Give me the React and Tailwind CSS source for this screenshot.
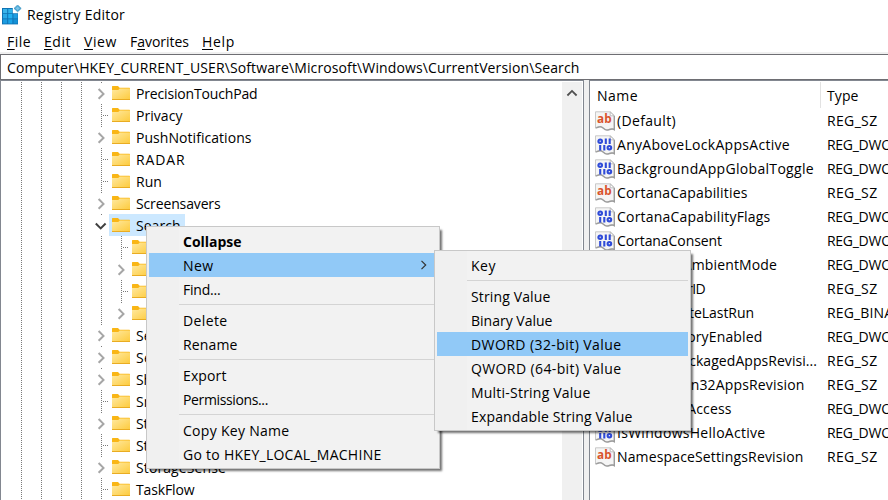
import React, { useLayoutEffect, useRef, useState } from "react";

/* Text that spreads its letters evenly over a fixed width. */
function Fit({ w, className = "", children }) {
  const ref = useRef(null);
  const [spacing, setSpacing] = useState(0);
  useLayoutEffect(() => {
    const el = ref.current;
    const natural = el.getBoundingClientRect().width;
    setSpacing((w - natural) / el.textContent.length);
  }, [w]);
  return (
    <span ref={ref} className={"inline-block shrink-0 whitespace-pre " + className} style={{ letterSpacing: spacing + "px" }}>
      {children}
    </span>
  );
}

function AppIcon() {
  return (
    <svg width="20" height="20" viewBox="0 0 20 20" shapeRendering="geometricPrecision">
      <rect x="0" y="3" width="16" height="16.4" fill="#0f73b4" />
      <rect x="1" y="4" width="4.2" height="4.2" fill="#3ab4ea" />
      <rect x="6.2" y="4" width="4.2" height="4.2" fill="#2fb2ea" />
      <rect x="1" y="9" width="4.2" height="4.4" fill="#2aa9e6" />
      <rect x="6.2" y="9" width="4.2" height="4.4" fill="#22b0f0" />
      <rect x="11.4" y="9" width="4.2" height="4.4" fill="#1f9de0" />
      <rect x="1" y="14.3" width="4.2" height="4.2" fill="#1c9ce0" />
      <rect x="6.2" y="14.3" width="4.2" height="4.2" fill="#1ba4e8" />
      <rect x="11.4" y="14.3" width="4.2" height="4.2" fill="#1591d6" />
      <path d="M10.8 2.2h5.4v6h-5.4z" fill="#fff" />
      <path d="M15.6 0 19.2 3.4 15.6 6.8 12 3.4z" fill="#4aa9d8" stroke="#3a8fbd" strokeWidth="0.7" />
      <path d="M15.6 1.4 17.6 3.4 15.6 5.2 13.6 3.4z" fill="#7fc4e6" />
    </svg>
  );
}

function Folder() {
  return (
    <svg width="18" height="14" viewBox="0 0 18 14" className="shrink-0">
      <defs>
        <linearGradient id="folderFill" x1="0" y1="0" x2="1" y2="1">
          <stop offset="0" stopColor="#ffe9a0" />
          <stop offset="1" stopColor="#fdcb3e" />
        </linearGradient>
      </defs>
      <path d="M0 .6Q0 0 .6 0H6l1.6 1.7H17.4q.6 0 .6.6V5H0z" fill="#f9b616" />
      <path d="M0 4h6.2L7.8 2.6H18V13.4H0z" fill="url(#folderFill)" />
      <path d="M0 13h18v1H0z" fill="#e9ac22" />
    </svg>
  );
}

function ValueIcon({ kind }) {
  return (
    <svg width="20" height="20" viewBox="0 0 20 20" className="shrink-0">
      <path d="M.5.8H15.4L19.4 4.6V18.4C16.6 16.6 14.6 18.8 12 18.8 8.6 19 8.2 15.2 5 15.4 3.2 15.4 2.4 16.4.5 16.6z" fill="#f5f5f5" stroke="#c4c4c4" strokeWidth="0.9" />
      <path d="M.5 16.9C2.4 16.7 3.2 15.7 5 15.7 8.2 15.6 8.6 19.2 12 19.1 14.6 19 16.6 16.9 19.3 18.7V5" fill="none" stroke="#9c9c9c" strokeWidth="1.4" />
      <path d="M15.2 1v3.8h4z" fill="#fff" stroke="#b0b0b0" strokeWidth="0.8" />
      {kind === "ab" ? (
        <text x="2.1" y="12.4" fontSize="12.5" fontWeight="700" fontFamily="Open Sans, sans-serif" textLength="14.5" lengthAdjust="spacingAndGlyphs" fill="#d9532c">ab</text>
      ) : (
        <g fill="none" stroke="#2f4bd8" strokeWidth="2.1">
          <ellipse cx="5.2" cy="6.2" rx="1.8" ry="1.7" />
          <path d="M10.8 3.5v5.4M14.7 3.5v5.4" />
          <path d="M5.2 10v5.4M9.3 10v5.4" />
          <ellipse cx="14.4" cy="12.7" rx="1.8" ry="1.7" />
        </g>
      )}
    </svg>
  );
}

function DotV({ className = "h-[22px]" }) {
  return <div className={"w-px bg-[repeating-linear-gradient(to_bottom,#7a7a7a_0_1px,transparent_1px_2px)] " + className} />;
}

function Expander({ state }) {
  if (state === "leaf") {
    return (
      <div className="ml-[10px] flex h-[22px] w-2 items-center">
        <DotV />
        <div className="ml-px h-px w-[6px] bg-[repeating-linear-gradient(to_right,#7a7a7a_0_1px,transparent_1px_2px)]" />
      </div>
    );
  }
  return (
    <div className="h-[22px] w-[18px]">
      <DotV className="ml-[10px] h-px" />
      <svg width="18" height="20" viewBox="0 0 18 20" className="block" fill="none">
        {state === "open" ? (
          <path d="M4.8 8.5l4.9 4.9 4.9-4.9" stroke="#404040" strokeWidth="2" />
        ) : (
          <path d="M7.6 6l4.9 4.9-4.9 4.9" stroke="#a6a6a6" strokeWidth="2" />
        )}
      </svg>
    </div>
  );
}

const TREE = [
  ["PrecisionTouchPad", "closed", 121.5],
  ["Privacy", "leaf", 46.5],
  ["PushNotifications", "closed", 115.5],
  ["RADAR", "leaf", 49.5],
  ["Run", "leaf", 26],
  ["Screensavers", "closed", 84.5],
  ["Search", "open", 44.5],
  ["Flighting", "leaf", 60, 1],
  ["Jumplist", "closed", 60, 1],
  ["Launch", "leaf", 60, 1],
  ["Microsoft", "closed", 60, 1],
  ["SearchSettings", "closed", 98],
  ["Security", "closed", 54],
  ["Shell Extensions", "closed", 104],
  ["SmartGlass", "leaf", 74],
  ["StartLayout", "closed", 74],
  ["StartupNotify", "leaf", 86],
  ["StorageSense", "closed", 90],
  ["TaskFlow", "leaf", 58.5],
];

function TreeRow({ name, state, w, child }) {
  return (
    <div className="flex h-[22px] shrink-0 items-center pl-[10px]">
      {(child ? [0, 1, 2, 3, 4] : [0, 1, 2, 3]).map((i) => (
        <div key={i} className="flex w-5 shrink-0 pl-[10px]">
          <DotV />
        </div>
      ))}
      <Expander state={state} />
      <div className={"flex h-[22px] items-center pr-1 pl-[3px] " + (state === "open" ? "bg-[#cce8ff]" : "")}>
        <Folder />
        <Fit w={w} className="ml-[6px] pt-[2px] leading-[22px]">{name}</Fit>
      </div>
    </div>
  );
}

const VALUES = [
  ["(Default)", "ab", "REG_SZ", 59],
  ["AnyAboveLockAppsActive", "bin", "REG_DWORD", 173],
  ["BackgroundAppGlobalToggle", "bin", "REG_DWORD", 197],
  ["CortanaCapabilities", "ab", "REG_SZ", 130.5],
  ["CortanaCapabilityFlags", "bin", "REG_DWORD", 153.5],
  ["CortanaConsent", "bin", "REG_DWORD", 105],
  ["CortanaInAmbientMode", "bin", "REG_DWORD", 160],
  ["CortanaUserID", "ab", "REG_SZ", 88],
  ["CortanaStateLastRun", "bin", "REG_BINARY", 137],
  ["DeviceHistoryEnabled", "bin", "REG_DWORD", 145.5],
  ["InstalledPackagedAppsRevisi...", "ab", "REG_SZ", 200],
  ["InstalledWin32AppsRevision", "ab", "REG_SZ", 187.5],
  ["IsAssignedAccess", "bin", "REG_DWORD", 114.5],
  ["IsWindowsHelloActive", "bin", "REG_DWORD", 148.5],
  ["NamespaceSettingsRevision", "ab", "REG_SZ", 186.5],
];
const TYPE_WIDTH = { REG_SZ: 50.5, REG_DWORD: 83, REG_BINARY: 83 };

function MenuItem({ label, w, active, bold, arrow }) {
  return (
    <div className={"flex h-6 items-center justify-between pl-[34px] " + (active ? "bg-[#91c9f7]" : "")}>
      <Fit w={w} className={bold ? "pt-[2px] leading-[22px] font-bold" : "pt-[2px] leading-[22px]"}>{label}</Fit>
      {arrow && (
        <svg width="8" height="12" viewBox="0 0 8 12" className="mr-[9px]" fill="none">
          <path d="M1.5 1.8l4.2 4.2-4.2 4.2" stroke="#333" strokeWidth="1.2" />
        </svg>
      )}
    </div>
  );
}

function Menu({ items, className }) {
  return (
    <div className={"absolute border border-[#c8c8c8] bg-[linear-gradient(to_right,#f0f0f0_32px,#f2f2f2_32px)] p-[2px] shadow-[3px_3px_2px_-1px_rgba(0,0,0,0.55)] " + className}>
      {items.map((it, i) =>
        it ? (
          <MenuItem key={i} {...it} />
        ) : (
          <div key={i} className="flex h-[7px] items-center pl-[30px]">
            <div className="h-px w-full bg-[#d4d4d4]" />
          </div>
        )
      )}
    </div>
  );
}

const CONTEXT = [
  { label: "Collapse", w: 58.5, bold: true },
  { label: "New", w: 30.5, active: true, arrow: true },
  { label: "Find...", w: 37.5 },
  null,
  { label: "Delete", w: 44.5 },
  { label: "Rename", w: 54.5 },
  null,
  { label: "Export", w: 43.5 },
  { label: "Permissions...", w: 85 },
  null,
  { label: "Copy Key Name", w: 106.5 },
  { label: "Go to HKEY_LOCAL_MACHINE", w: 198.5 },
];

const NEW_MENU = [
  { label: "Key", w: 25 },
  null,
  { label: "String Value", w: 79.5 },
  { label: "Binary Value", w: 81.5 },
  { label: "DWORD (32-bit) Value", w: 150.5, active: true },
  { label: "QWORD (64-bit) Value", w: 150.5 },
  { label: "Multi-String Value", w: 119.5 },
  { label: "Expandable String Value", w: 161.5 },
];

const MENUBAR = [
  ["", "F", "ile", 24, "w-[37px]"],
  ["", "E", "dit", 27, "w-10"],
  ["", "V", "iew", 33, "w-[46px]"],
  ["F", "a", "vorites", 59, "w-[72px]"],
  ["", "H", "elp", 33, "w-[46px]"],
];

export default function App() {
  return (
    <div className="relative flex h-[500px] w-[888px] flex-col overflow-hidden bg-white font-['Open_Sans',sans-serif] text-[14px] text-black">
      <div className="flex h-[30px] shrink-0 items-center pl-[2px]">
        <AppIcon />
        <Fit w={98} className="ml-[5px] leading-[30px]">Registry Editor</Fit>
      </div>
      <div className="flex h-[22px] shrink-0 items-center pl-[7px]">
        {MENUBAR.map(([a, u, b, w, cell]) => (
          <div key={u} className={cell}>
            <Fit w={w} className="pt-[2px] leading-[20px]">
              {a}<span className="underline decoration-1 underline-offset-2">{u}</span>{b}
            </Fit>
          </div>
        ))}
      </div>
      <div className="h-[2px] shrink-0 bg-[#f0f0f0]" />
      <div className="flex h-[26px] shrink-0 items-center border border-r-0 border-[#6e6e73] pl-[6px]">
        <Fit w={572.5} className="pt-[2px] leading-[22px]">Computer\HKEY_CURRENT_USER\Software\Microsoft\Windows\CurrentVersion\Search</Fit>
      </div>
      <div className="flex h-[420px] shrink-0">
        <div className="flex w-[584px] shrink-0 border-x border-t border-[#828790]">
          <div className="flex w-[561px] flex-col overflow-hidden pt-px">
            {TREE.map(([name, state, w, child]) => (
              <TreeRow key={name} name={name} state={state} w={w} child={child} />
            ))}
          </div>
          <div className="mt-px flex w-5 justify-center bg-[#f0f0f0] pt-[7px]">
            <svg width="12" height="8" viewBox="0 0 12 8" fill="none">
              <path d="M1.4 6.5L6 1.9l4.6 4.6" stroke="#505050" strokeWidth="1.8" />
            </svg>
          </div>
        </div>
        <div className="w-[5px] shrink-0 bg-[#f0f0f0]" />
        <div className="flex w-[299px] shrink-0 flex-col overflow-hidden border-t border-l border-[#828790]">
          <div className="flex h-[28px] shrink-0">
            <div className="mt-px h-[26px] w-[231px] border-r border-[#e2e2e2] pl-[7px]">
              <Fit w={41} className="leading-[27px]">Name</Fit>
            </div>
            <Fit w={31.5} className="ml-[6px] leading-[29px]">Type</Fit>
          </div>
          {VALUES.map(([name, kind, type, w]) => (
            <div key={name} className="flex h-6 shrink-0 items-center pl-[5px]">
              <ValueIcon kind={kind} />
              <div className="ml-[2px] flex w-[210px] shrink-0">
                <Fit w={w} className="leading-6">{name}</Fit>
              </div>
              <Fit w={TYPE_WIDTH[type]} className="leading-6">{type}</Fit>
            </div>
          ))}
        </div>
      </div>
      <Menu items={CONTEXT} className="top-[226px] left-[146px] h-[243px] w-[294px]" />
      <Menu items={NEW_MENU} className="top-[250px] left-[434px] h-[181px] w-[257px]" />
    </div>
  );
}
